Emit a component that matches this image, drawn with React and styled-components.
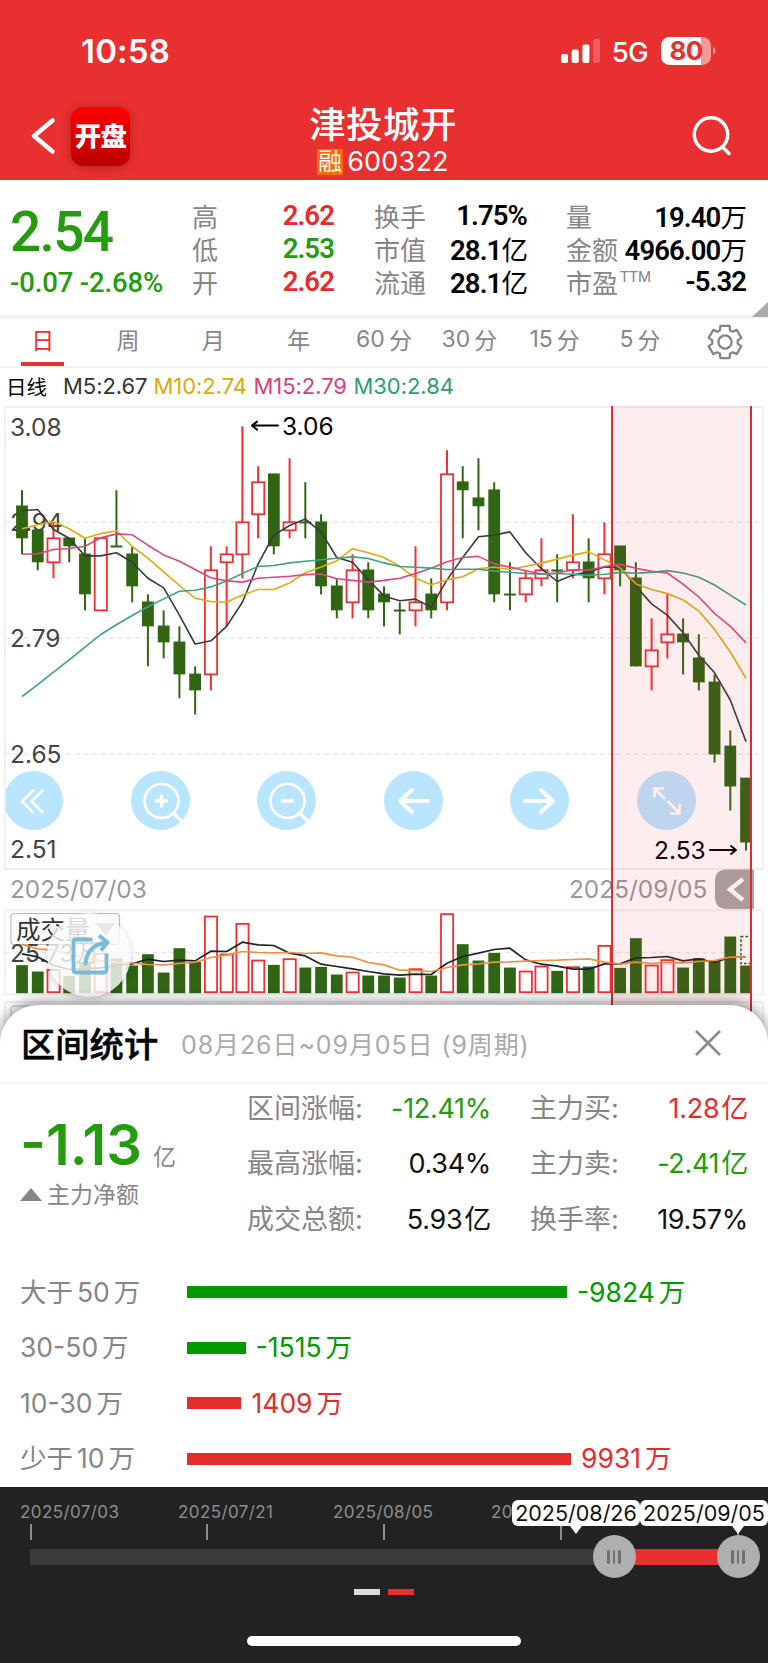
import React from "react";
import styled, { createGlobalStyle } from "styled-components";

const C = {
  red: "#e93030",
  up: "#f23031",
  down: "#2f6513",
  green: "#259b0e",
  value: "#e62b2e",
  label: "#868686",
  line: "#f2f2f2",
};

const ui = `Inter, "Noto Sans CJK SC", sans-serif`;
const din = `Roboto, "Noto Sans CJK SC", sans-serif`;

const Global = createGlobalStyle`
  *, *::before, *::after { box-sizing: border-box; }
  body { margin: 0; background: #fff; }
`;

const Screen = styled.div`
  width: 768px;
  height: 1663px;
  overflow: hidden;
  display: flex;
  flex-direction: column;
  background: #fff;
  font-family: ${ui};
  white-space: nowrap;
`;

/* ---------- header ---------- */
const Header = styled.header`
  height: 179.5px;
  flex: none;
  background: ${C.red};
  color: #fff;
`;
const StatusBar = styled.div`
  height: 101px;
  padding: 1px 52px 0 81px;
  display: flex;
  align-items: center;
  justify-content: space-between;
`;
const Clock = styled.div`
  font-size: 33px;
  font-weight: 600;
  letter-spacing: 0.2px;
`;
const StatusRight = styled.div`
  display: flex;
  align-items: center;
`;
const Network = styled.span`
  margin: 1px 13px 0 12px;
  font-size: 27.5px;
  font-weight: 500;
  letter-spacing: -0.6px;
`;
const Battery = styled.div`
  width: 50px;
  height: 28px;
  border-radius: 8.5px;
  background: linear-gradient(90deg, #fff 40px, #f49898 40px);
  color: ${C.red};
  font-size: 26px;
  font-weight: 700;
  line-height: 28px;
  text-align: center;
  letter-spacing: -0.7px;
`;
const Nav = styled.div`
  height: 78px;
  display: flex;
  align-items: center;
  justify-content: space-between;
  padding: 0 35px 1px 30px;
`;
const NavLeft = styled.div`
  display: flex;
  align-items: center;
  gap: 13px;
  width: 200px;
  padding-bottom: 7px;
`;
const Logo = styled.div`
  width: 59px;
  height: 59px;
  border-radius: 12px;
  background: linear-gradient(#fe0000, #b90000);
  box-shadow: 0 1px 10px rgba(90, 0, 0, 0.35);
  font-size: 26.5px;
  font-weight: 900;
  line-height: 59px;
  text-align: center;
  letter-spacing: -0.8px;
`;
const TitleBlock = styled.div`
  display: flex;
  flex-direction: column;
  align-items: center;
`;
const Title = styled.div`
  font-size: 36.5px;
  font-weight: 500;
  line-height: 44px;
  letter-spacing: 0.4px;
`;
const Ticker = styled.div`
  display: flex;
  align-items: center;
  gap: 4px;
  font-size: 27px;
  line-height: 30px;
  letter-spacing: 0.2px;
`;
const Badge = styled.span`
  width: 26px;
  height: 26px;
  background: #ff6a00;
  font-size: 24px;
  line-height: 25px;
  text-align: center;
`;
const NavRight = styled.div`
  width: 197px;
  display: flex;
  justify-content: flex-end;
  padding-bottom: 7px;
`;

/* ---------- quote ---------- */
const Quote = styled.section`
  height: 139.5px;
  flex: none;
  display: flex;
  padding: 19px 22px 0 10px;
  border-bottom: 4px solid ${C.line};
  font-family: ${din};
  position: relative;
`;
const Last = styled.div`
  width: 182px;
  color: ${C.green};
  font-weight: 500;
`;
const Price = styled.div`
  font-size: 55px;
  line-height: 67px;
  letter-spacing: -1.7px;
`;
const Change = styled.div`
  font-size: 27.5px;
  line-height: 33px;
  letter-spacing: -0.15px;
`;
const QuoteCol = styled.div`
  width: ${(p) => p.$w}px;
  margin-right: ${(p) => p.$gap}px;
`;
const QuoteRow = styled.div`
  display: flex;
  justify-content: space-between;
  align-items: center;
  height: 33px;
  font-size: 26px;
  color: ${C.label};
`;
const QuoteValue = styled.span`
  font-size: 27.5px;
  font-weight: 600;
  letter-spacing: -0.9px;
  color: ${(p) => p.$c || "#000"};
`;
const Unit = styled.span`
  font-size: 26.5px;
  font-weight: 400;
`;
const Sup = styled.sup`
  font-size: 15px;
  line-height: 0;
  vertical-align: 11px;
  margin-left: 2px;
`;
const Corner = styled.i`
  position: absolute;
  right: 0;
  bottom: -2px;
  border: solid transparent;
  border-width: 0 0 15px 16px;
  border-bottom-color: #aaa;
`;

/* ---------- period tabs ---------- */
const Tabs = styled.nav`
  height: 49px;
  flex: none;
  display: grid;
  grid-template-columns: repeat(9, 1fr);
  border-bottom: 2px solid ${C.line};
`;
const Tab = styled.div`
  display: flex;
  align-items: center;
  justify-content: center;
  gap: 4px;
  font-size: 23px;
  color: ${(p) => (p.$on ? C.red : C.label)};
  padding-bottom: ${(p) => (p.$icon ? 2 : 8)}px;
  position: relative;
  &::after {
    content: "";
    display: ${(p) => (p.$on ? "block" : "none")};
    position: absolute;
    bottom: 0;
    width: 43px;
    height: 4px;
    background: #e0343a;
  }
`;
const Legend = styled.div`
  height: 38px;
  flex: none;
  display: flex;
  align-items: center;
  padding: 0 0 3px 6px;
  font-size: 22px;
`;
const LegendName = styled.span`
  width: 57px;
  font-size: 20.5px;
`;
const LegendItem = styled.span`
  width: ${(p) => p.$w}px;
  color: ${(p) => p.$c};
  letter-spacing: -0.05px;
`;

/* ---------- chart ---------- */
const ChartArea = styled.section`
  height: 677px;
  flex: none;
  position: relative;
  & > svg { display: block; }
`;
const ToolButtons = styled.div`
  position: absolute;
  left: 6px;
  top: 365px;
  width: 720px;
  display: flex;
  overflow: hidden;
  gap: 67.6px;
`;
const Tool = styled.div`
  width: 59px;
  height: 59px;
  flex: none;
  border-radius: 50%;
  background: #bae5fe;
  &:first-child { margin-left: -2px; }
`;
const RangeMask = styled.div`
  position: absolute;
  left: 610.5px;
  top: 0;
  width: 141.5px;
  height: 620px;
  background: rgba(232, 48, 56, 0.085);
  border: solid #dc2c30;
  border-width: 0 2px;
`;
const Share = styled.div`
  position: absolute;
  left: 47px;
  top: 507px;
  width: 84px;
  height: 84px;
  border-radius: 50%;
  background: rgba(250, 250, 250, 0.82);
  box-shadow: 0 2px 7px rgba(0, 0, 0, 0.2);
  display: flex;
  align-items: center;
  justify-content: center;
`;

/* ---------- sheet ---------- */
const Sheet = styled.section`
  margin-top: -78.5px;
  height: 482px;
  flex: none;
  position: relative;
  background: #fff;
  border-radius: 38px 38px 0 0;
  box-shadow: 0 -3px 14px rgba(0, 0, 0, 0.42);
`;
const SheetHead = styled.div`
  height: 79px;
  display: flex;
  align-items: center;
  padding: 0 46px 0 21px;
  border-bottom: 2px solid #f5f5f5;
`;
const SheetTitle = styled.h2`
  margin: 0;
  padding-bottom: 2px;
  font-size: 34.3px;
  font-weight: 500;
  -webkit-text-stroke: 0.5px #000;
  width: 160px;
`;
const SheetRange = styled.span`
  flex: 1;
  padding-bottom: 1px;
  color: #aaa;
  font-size: 25px;
  letter-spacing: 0.9px;
`;
const Summary = styled.div`
  height: 181px;
  display: flex;
  padding-right: 20px;
`;
const Net = styled.div`
  width: 247px;
  padding: 28px 0 0 20px;
`;
const NetValue = styled.div`
  display: flex;
  align-items: baseline;
  gap: 11px;
  height: 68px;
  line-height: 66px;
  font-size: 56px;
  font-weight: 600;
  letter-spacing: 0px;
  color: ${C.green};
`;
const NetUnit = styled.span`
  font-size: 23px;
  font-weight: 400;
  color: ${C.label};
`;
const NetLabel = styled.div`
  display: flex;
  align-items: center;
  gap: 5px;
  font-size: 23px;
  line-height: 30px;
  color: ${C.label};
`;
const UpMark = styled.i`
  border: solid transparent;
  border-width: 0 11.5px 13px;
  border-bottom-color: ${C.label};
`;
const Stats = styled.div`
  flex: 1;
  margin-top: -3px;
  display: grid;
  grid-template-columns: 244px 1fr;
  grid-auto-rows: 55.5px;
  column-gap: 39px;
`;
const Stat = styled.div`
  display: flex;
  align-items: baseline;
  justify-content: space-between;
  font-size: 27px;
  line-height: 55.5px;
  color: ${C.label};
`;
const StatValue = styled.span`
  letter-spacing: -0.3px;
  color: ${(p) => p.$c || "#111"};
`;
const StatUnit = styled.span`
  margin-left: 2px;
`;
const Flows = styled.div`
  display: flex;
  flex-direction: column;
`;
const Flow = styled.div`
  height: 55.5px;
  line-height: 53px;
  display: flex;
  align-items: center;
  padding-left: 20px;
  font-size: 26.5px;
  color: ${(p) => p.$c};
`;
const FlowName = styled.span`
  width: 167px;
  color: ${C.label};
  display: flex;
  align-items: baseline;
  gap: 4px;
`;
const FlowBar = styled.i`
  height: 12px;
  margin-right: 10px;
  background: ${(p) => p.$c};
`;
const FlowValue = styled.span`
  display: flex;
  align-items: baseline;
  gap: 4px;
`;

/* ---------- range slider ---------- */
const Footer = styled.footer`
  flex: 1;
  background: #222;
  position: relative;
`;
const DateScale = styled.div`
  display: flex;
  padding: 15px 0 0 20px;
  color: #8e8e8e;
  font-size: 17px;
  line-height: 20px;
  letter-spacing: 0.4px;
`;
const ScaleDate = styled.span`
  width: ${(p) => p.$w}px;
`;
const Ticks = styled.div`
  display: flex;
  justify-content: space-between;
  width: 709px;
  margin: 2px 0 0 29.5px;
`;
const Tick = styled.i`
  width: 2px;
  height: 16px;
  background: #8e8e8e;
`;
const Track = styled.div`
  margin: 9px 0 0 30px;
  width: 708px;
  height: 16px;
  display: flex;
  justify-content: flex-end;
  background: #3b3b3b;
  position: relative;
`;
const Selected = styled.div`
  width: 124px;
  background: ${C.red};
`;
const Handle = styled.div`
  position: absolute;
  left: ${(p) => p.$x}px;
  top: -13.5px;
  width: 43px;
  height: 43px;
  border-radius: 50%;
  background: #afafaf;
  display: flex;
  align-items: center;
  justify-content: center;
  gap: 2.5px;
`;
const Grip = styled.i`
  width: 2.8px;
  height: 14px;
  border-radius: 1.4px;
  background: #707070;
`;
const Tip = styled.div`
  position: absolute;
  top: 13px;
  left: ${(p) => p.$x}px;
  width: 128px;
  height: 26px;
  border-radius: 6px;
  background: #fff;
  color: #111;
  font-size: 21.5px;
  line-height: 26px;
  text-align: center;
  &::after {
    content: "";
    position: absolute;
    top: 26px;
    left: ${(p) => p.$arrow - 6}px;
    border: solid transparent;
    border-width: 8px 6px 0;
    border-top-color: #fff;
  }
`;
const Pager = styled.div`
  display: flex;
  justify-content: center;
  gap: 8px;
  margin-top: 24px;
`;
const Page = styled.i`
  width: 26px;
  height: 6px;
  background: ${(p) => p.$c};
`;
const HomeBar = styled.div`
  width: 274px;
  height: 10px;
  border-radius: 5px;
  background: #fff;
  margin: 41px auto 0;
`;

/* ---------- data: [up, top, bottom, high, low] of each day ---------- */
const days = [
  [0, 2.96, 2.92, 2.98, 2.9], [0, 2.93, 2.89, 2.93, 2.88], [1, 2.92, 2.89, 2.94, 2.87],
  [0, 2.92, 2.91, 2.92, 2.89], [0, 2.9, 2.85, 2.92, 2.83], [1, 2.92, 2.83, 2.92, 2.83],
  [0, 2.91, 2.91, 2.98, 2.91], [0, 2.9, 2.86, 2.91, 2.84], [0, 2.84, 2.81, 2.85, 2.76],
  [0, 2.81, 2.79, 2.83, 2.77], [0, 2.79, 2.75, 2.81, 2.72], [0, 2.75, 2.73, 2.76, 2.7],
  [1, 2.88, 2.75, 2.91, 2.73], [1, 2.9, 2.89, 2.91, 2.81], [1, 2.94, 2.9, 3.06, 2.87],
  [1, 2.99, 2.95, 3.01, 2.92], [0, 3.0, 2.91, 3.0, 2.9], [1, 2.94, 2.93, 3.02, 2.92],
  [0, 2.94, 2.94, 2.99, 2.92], [0, 2.94, 2.86, 2.95, 2.85], [0, 2.86, 2.83, 2.87, 2.82],
  [1, 2.88, 2.84, 2.9, 2.82], [0, 2.88, 2.83, 2.89, 2.82], [0, 2.85, 2.84, 2.86, 2.81],
  [0, 2.83, 2.83, 2.84, 2.8], [1, 2.84, 2.83, 2.91, 2.81], [0, 2.85, 2.83, 2.87, 2.82],
  [1, 3.0, 2.84, 3.03, 2.83], [0, 2.99, 2.98, 3.01, 2.92], [0, 2.97, 2.96, 3.02, 2.93],
  [0, 2.98, 2.85, 2.99, 2.84], [0, 2.85, 2.85, 2.89, 2.83], [1, 2.87, 2.85, 2.88, 2.84],
  [1, 2.88, 2.87, 2.92, 2.86], [0, 2.88, 2.88, 2.9, 2.84], [1, 2.89, 2.88, 2.95, 2.87],
  [0, 2.89, 2.87, 2.92, 2.84], [1, 2.9, 2.87, 2.94, 2.85], [0, 2.91, 2.88, 2.91, 2.86],
  [0, 2.87, 2.76, 2.89, 2.76], [1, 2.78, 2.76, 2.82, 2.73], [1, 2.8, 2.79, 2.85, 2.77],
  [0, 2.8, 2.79, 2.82, 2.75], [0, 2.77, 2.74, 2.8, 2.73], [0, 2.74, 2.65, 2.75, 2.64],
  [0, 2.66, 2.61, 2.68, 2.58], [0, 2.62, 2.54, 2.62, 2.53],
];
const closes = days.map((d) => (d[0] ? d[1] : d[2]));

const seeds = {
  5: [2.9543, 2.956, 2.931, 2.92],
  10: [2.9318, 2.9368, 2.9409, 2.9318, 2.9201, 2.9259, 2.9293, 2.9097, 2.8951],
  15: [2.9001, 2.9006, 2.906, 2.9072, 2.9101, 2.9205, 2.9255, 2.9243, 2.9114, 2.8993, 2.8914, 2.881, 2.8706, 2.8668],
  30: [2.7224, 2.7373, 2.7528, 2.7682, 2.784, 2.7998, 2.8119, 2.8235, 2.8344, 2.8443, 2.8539, 2.8552, 2.8593, 2.8668,
    2.876, 2.8847, 2.886, 2.8893, 2.8914, 2.8931, 2.8951, 2.8968, 2.8947, 2.8893, 2.8847, 2.8839, 2.8827, 2.881, 2.8814],
};
const average = (n) =>
  closes.map((_, i) =>
    i < n - 1 ? seeds[n][i] : closes.slice(i - n + 1, i + 1).reduce((a, b) => a + b, 0) / n
  );

/* volume bar heights and averages, in thirds of a pixel above the base line */
const volumes = [84, 65, 70, 52, 95, 118, 104, 83, 117, 62, 135, 94, 230, 116, 208, 98, 85, 102, 77, 79, 56, 62, 53, 53,
  47, 72, 53, 237, 147, 98, 121, 77, 65, 80, 67, 78, 80, 142, 76, 165, 83, 99, 77, 105, 98, 170, 83];
const volFast = [118, 109, 84, 71, 74, 76, 83, 88, 102, 95, 99, 97, 126, 125, 153, 145, 143, 120, 112, 87, 80, 73, 65,
  58, 54, 57, 56, 90, 110, 120, 131, 135, 100, 87, 81, 72, 72, 88, 88, 106, 107, 110, 97, 103, 92, 108, 108];
const volSlow = [146, 133, 129, 118, 105, 97, 93, 90, 86, 85, 89, 93, 107, 114, 125, 122, 121, 122, 119, 121, 112, 108,
  92, 85, 69, 68, 65, 77, 85, 88, 93, 94, 96, 98, 99, 101, 103, 93, 87, 93, 89, 92, 91, 95, 98, 108, 108];

const x = (i) => 22 + i * 15.74;
const y = (p) => 20.2 + (3.06 - p) * 800.6;
const BASE = 587.2;
const path = (pts) => pts.map(([a, b]) => `${a.toFixed(1)},${b.toFixed(1)}`).join(" ");

function Candles() {
  return days.map(([up, top, bot, hi, lo], i) => {
    const c = up ? C.up : C.down;
    const cx = x(i);
    return (
      <g key={i} stroke={c} strokeWidth="2">
        <line x1={cx} x2={cx} y1={y(hi)} y2={up ? y(top) : y(lo)} />
        {up ? <line x1={cx} x2={cx} y1={y(bot)} y2={y(lo)} /> : null}
        {up ? (
          <rect x={cx - 6} y={y(top)} width="12.2" height={y(bot) - y(top)} fill="#fff" strokeWidth="1.8" />
        ) : (
          <rect x={cx - 5.9} y={y(top) - 0.8} width="11.8" height={Math.max(y(bot) - y(top) + 0.8, 2)} fill={c} stroke="none" />
        )}
      </g>
    );
  });
}

function Volumes() {
  return volumes.map((v, i) => {
    const h = v / 3;
    return days[i][0] ? (
      <rect key={i} x={x(i) - 6} y={BASE - h} width="12.2" height={h - 1} fill="#fff" stroke={C.up} strokeWidth="1.8" />
    ) : (
      <rect key={i} x={x(i) - 5.9} y={BASE - h} width="11.8" height={h} fill={C.down} />
    );
  });
}

function Chart() {
  return (
    <svg width="768" height="677" viewBox="0 0 768 677" fontFamily={'Inter, "Noto Sans CJK SC", sans-serif'}>
      <g fill="none" stroke="#f0f0f0" strokeWidth="2">
        <rect x="5" y="1" width="758" height="462" />
        <rect x="5" y="504.3" width="758" height="84" />
        <rect x="5" y="596" width="758" height="90" />
      </g>
      <g stroke="#e9e9e9" strokeWidth="1.5" strokeDasharray="5 3.6">
        {[116.3, 232.3, 348, 546.4].map((gy) => (
          <line key={gy} x1="6" x2="762" y1={gy} y2={gy} />
        ))}
      </g>
      <g fontSize="24.5" fill="#444">
        <text x="10" y="30">3.08</text>
        <text x="10" y="125">2.94</text>
        <text x="10" y="241">2.79</text>
        <text x="10" y="357">2.65</text>
        <text x="10" y="451.5">2.51</text>
      </g>
      <g fontSize="24.4" fill="#999">
        <text x="10" y="492">2025/07/03</text>
        <text x="569" y="492">2025/09/05</text>
      </g>
      <Candles />
      <g fill="none" strokeWidth="1.6" strokeLinejoin="round">
        {[[5, "#3a3a3a"], [10, "#dfab10"], [15, "#dc4680"], [30, "#3fa183"]].map(([n, c]) => (
          <polyline key={n} stroke={c} points={path(average(n).map((p, i) => [x(i), y(p)]))} />
        ))}
      </g>
      <g fontSize="24.5" fill="#000">
        <text x="282" y="28.5">3.06</text>
        <text x="654" y="453">2.53</text>
      </g>
      <g fill="none" stroke="#000" strokeWidth="2" strokeLinecap="round" strokeLinejoin="round">
        <path d="M278 19.6H252M257 15.6L252 19.6L257 23.6" />
        <path d="M710 444H736M731 440L736 444L731 448" />
      </g>
      <rect x="11" y="507.5" width="108.5" height="31" rx="3" fill="#fff" stroke="#bbb" strokeWidth="1.2" />
      <text x="16" y="532.5" fontSize="24.6" fill="#333">成交量</text>
      <path d="M96 517H115L105.5 530Z" fill="#999" />
      <text x="10" y="555.5" fontSize="24.5" fill="#444">25.73万</text>
      <Volumes />
      <rect x="741" y="530.5" width="14" height="27" fill="#fff" stroke={C.down} strokeWidth="1.6" strokeDasharray="2.5 2" />
      <g fill="none" strokeWidth="1.7" strokeLinejoin="round">
        <polyline stroke="#222" points={path(volFast.map((v, i) => [x(i), BASE - v / 3]))} />
        <polyline stroke="#ee9046" points={path(volSlow.map((v, i) => [x(i), BASE - v / 3]))} />
      </g>
      <rect x="752" y="525" width="6" height="63" fill="#fff" />
      <path d="M754 463.5H727Q715 463.5 715 475.5V490.5Q715 503 727 503H754Z" fill="#a7a5a5" />
      <path d="M743 473L730 483.5L743 494" fill="none" stroke="#fff" strokeWidth="4.5" />
      <rect x="11" y="600" width="108" height="30" rx="3" fill="#fff" stroke="#bbb" />
    </svg>
  );
}

const glyphs = [
  <path d="M29.5 19L18 30.5L29.5 42M39 19L27.5 30.5L39 42" strokeWidth="2.5" />,
  <><circle cx="30.5" cy="30" r="17" strokeWidth="2.6" /><path d="M24 30H37M30.5 23.5V36.5" strokeWidth="3.4" /><path d="M42.5 42L50.5 50" strokeWidth="3.4" /></>,
  <><circle cx="30.5" cy="30" r="17" strokeWidth="2.6" /><path d="M24 30H37" strokeWidth="3.4" /><path d="M42.5 42L50.5 50" strokeWidth="3.4" /></>,
  <path d="M44 30H16M28 19L16 30L28 41" strokeWidth="3.8" strokeLinecap="round" strokeLinejoin="round" />,
  <path d="M15 30H43M31 19L43 30L31 41" strokeWidth="3.8" strokeLinecap="round" strokeLinejoin="round" />,
  <path d="M17.500 26.500V17.500H27M17.500 17.500L28 28M30.500 30L42.500 42M33 42.500H42.500V33" strokeWidth="2.700" />,
];

function Gear() {
  const pts = [];
  for (let k = 0; k < 6; k++) {
    [[-23, 12.8], [-16, 16.8], [16, 16.8], [23, 12.8]].forEach(([o, r]) => {
      const a = ((k * 60 - 90 + o) * Math.PI) / 180;
      pts.push([19 + r * Math.cos(a), 19 + r * Math.sin(a)]);
    });
  }
  return (
    <svg width="38" height="38" viewBox="0 0 38 38" fill="none" stroke="#868686" strokeWidth="2.3" strokeLinejoin="round">
      <polygon points={path(pts)} />
      <circle cx="19" cy="19" r="6.6" />
    </svg>
  );
}

const quotes = [
  { w: 142, gap: 40, rows: [["高", "2.62", "", C.value], ["低", "2.53", "", C.green], ["开", "2.62", "", C.value]] },
  { w: 153, gap: 39, rows: [["换手", "1.75%"], ["市值", "28.1", "亿"], ["流通", "28.1", "亿"]] },
  { w: 180, gap: 0, rows: [["量", "19.40", "万"], ["金额", "4966.00", "万"], ["市盈", "-5.32"]] },
];
const tabs = [["日"], ["周"], ["月"], ["年"], ["60", "分"], ["30", "分"], ["15", "分"], ["5", "分"]];
const stats = [
  ["区间涨幅:", "-12.41%", "", C.green], ["主力买:", "1.28", "亿", C.value],
  ["最高涨幅:", "0.34%"], ["主力卖:", "-2.41", "亿", C.green],
  ["成交总额:", "5.93", "亿"], ["换手率:", "19.57%"],
];
const flows = [
  [["大于", "50", "万"], -9824], [["30-50", "万"], -1515], [["10-30", "万"], 1409], [["少于", "10", "万"], 9931],
];

export default function App() {
  return (
    <Screen>
      <Global />
      <Header>
        <StatusBar>
          <Clock>10:58</Clock>
          <StatusRight>
            <svg width="39" height="26" viewBox="0 0 39 26" fill="#fff">
              <rect x="0" y="16" width="7" height="9" rx="2" />
              <rect x="10.7" y="11.5" width="7" height="13.5" rx="2" />
              <rect x="21.4" y="6.5" width="7" height="18.5" rx="2" />
              <rect x="32" y="1" width="7" height="24" rx="2" opacity="0.22" />
            </svg>
            <Network>5G</Network>
            <Battery>80</Battery>
            <svg width="5" height="10" viewBox="0 0 5 10"><path d="M2 0.5Q7 5 2 9.5Z" fill="#f49898" /></svg>
          </StatusRight>
        </StatusBar>
        <Nav>
          <NavLeft>
            <svg width="28" height="40" viewBox="0 0 28 40" fill="none" stroke="#fff" strokeWidth="4.5" strokeLinecap="round" strokeLinejoin="round">
              <path d="M22.5 4.500L4 20L22.5 35.500" />
            </svg>
            <Logo>开盘</Logo>
          </NavLeft>
          <TitleBlock>
            <Title>津投城开</Title>
            <Ticker><Badge>融</Badge>600322</Ticker>
          </TitleBlock>
          <NavRight>
            <svg width="42" height="42" viewBox="0 0 42 42" fill="none" stroke="#fff" strokeWidth="3.4" strokeLinecap="round">
              <circle cx="20" cy="19.5" r="16.7" />
              <path d="M31.5 32L38 38.5" />
            </svg>
          </NavRight>
        </Nav>
      </Header>

      <Quote>
        <Last>
          <Price>2.54</Price>
          <Change>-0.07 -2.68%</Change>
        </Last>
        {quotes.map((col, i) => (
          <QuoteCol key={i} $w={col.w} $gap={col.gap}>
            {col.rows.map(([name, v, unit, c]) => (
              <QuoteRow key={name}>
                <span>{name}{name === "市盈" && <Sup>TTM</Sup>}</span>
                <QuoteValue $c={c}>{v}{unit && <Unit>{unit}</Unit>}</QuoteValue>
              </QuoteRow>
            ))}
          </QuoteCol>
        ))}
        <Corner />
      </Quote>

      <Tabs>
        {tabs.map((t, i) => (
          <Tab key={i} $on={i === 0}>{t.map((s) => <span key={s}>{s}</span>)}</Tab>
        ))}
        <Tab $icon><Gear /></Tab>
      </Tabs>
      <Legend>
        <LegendName>日线</LegendName>
        <LegendItem $w={90.5} $c="#333">M5:2.67</LegendItem>
        <LegendItem $w={100} $c="#dca907">M10:2.74</LegendItem>
        <LegendItem $w={100} $c="#d93e7b">M15:2.79</LegendItem>
        <LegendItem $w={100} $c="#2f9b78">M30:2.84</LegendItem>
      </Legend>

      <ChartArea>
        <Chart />
        <ToolButtons>
          {glyphs.map((g, i) => (
            <Tool key={i}>
              <svg width="59" height="59" viewBox="0 0 59 59" fill="none" stroke="#fff">{g}</svg>
            </Tool>
          ))}
        </ToolButtons>
        <RangeMask />
        <Share>
          <svg width="42" height="42" viewBox="0 0 42 42" fill="none" stroke="#7db9da" strokeWidth="3.8">
            <path d="M24.5 5.500H8Q5.500 5.500 5.500 8V36Q5.500 38.500 8 38.500H36Q38.500 38.500 38.500 36V19.500" />
            <path d="M17.500 31.500Q17.500 11.500 39 8.500M31 1.500L39.500 8.500L33 16.500" />
          </svg>
        </Share>
      </ChartArea>

      <Sheet>
        <SheetHead>
          <SheetTitle>区间统计</SheetTitle>
          <SheetRange>08月26日~09月05日 (9周期)</SheetRange>
          <svg width="28" height="28" viewBox="0 0 28 28" stroke="#8c8c8c" strokeWidth="2.8">
            <path d="M2 2L26 26M26 2L2 26" />
          </svg>
        </SheetHead>
        <Summary>
          <Net>
            <NetValue>-1.13<NetUnit>亿</NetUnit></NetValue>
            <NetLabel><UpMark />主力净额</NetLabel>
          </Net>
          <Stats>
            {stats.map(([name, v, unit, c]) => (
              <Stat key={name}>
                <span>{name}</span>
                <StatValue $c={c}>{v}{unit && <StatUnit>{unit}</StatUnit>}</StatValue>
              </Stat>
            ))}
          </Stats>
        </Summary>
        <Flows>
          {flows.map(([name, v]) => {
            const c = v < 0 ? "#009a00" : "#e32d2d";
            return (
              <Flow key={v} $c={c}>
                <FlowName>{name.map((s) => <span key={s}>{s}</span>)}</FlowName>
                <FlowBar $c={c} style={{ width: Math.abs(v) * 0.03867 }} />
                <FlowValue><span>{v}</span><span>万</span></FlowValue>
              </Flow>
            );
          })}
        </Flows>
      </Sheet>

      <Footer>
        <DateScale>
          <ScaleDate $w={158}>2025/07/03</ScaleDate>
          <ScaleDate $w={155}>2025/07/21</ScaleDate>
          <ScaleDate $w={158}>2025/08/05</ScaleDate>
          <ScaleDate $w={100}>2025/08/20</ScaleDate>
        </DateScale>
        <Ticks>{[0, 1, 2, 3, 4].map((k) => <Tick key={k} />)}</Ticks>
        <Track>
          <Selected />
          {[562.5, 686.5].map((hx) => (
            <Handle key={hx} $x={hx}><Grip /><Grip /><Grip /></Handle>
          ))}
        </Track>
        <Tip $x={512} $arrow={64}>2025/08/26</Tip>
        <Tip $x={640} $arrow={98}>2025/09/05</Tip>
        <Pager><Page $c="#ddd" /><Page $c={C.red} /></Pager>
        <HomeBar />
      </Footer>
    </Screen>
  );
}
